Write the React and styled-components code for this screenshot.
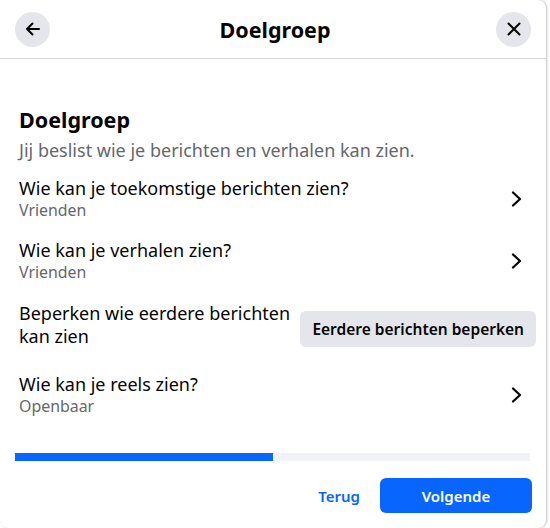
import React from 'react';
import styled, { createGlobalStyle } from 'styled-components';

const GlobalStyle = createGlobalStyle`
    body {
        margin: 0;
        background: #ffffff;
        font-family: "Noto Sans", "Open Sans", sans-serif;
        color: #050505;
    }
`

const Card = styled.div`
    width: 546px;
    height: 528px;
    background: #ffffff;
    border-radius: 0 8px 8px 8px;
    box-shadow: 1px 0 2px rgba(0, 0, 0, 0.25);
    display: flex;
    flex-direction: column;
    box-sizing: border-box;
`

const Header = styled.div`
    height: 58px;
    border-bottom: 1px solid #d6d8dc;
    display: flex;
    align-items: center;
    justify-content: space-between;
    padding: 0 15px;
    flex-shrink: 0;
`

const RoundButton = styled.button`
    width: 35px;
    height: 35px;
    border-radius: 50%;
    border: none;
    background: #e4e6eb;
    display: flex;
    align-items: center;
    justify-content: center;
    padding: 0;
`

const HeaderTitle = styled.h2`
    margin: 0 0 0 4px;
    font-size: 21.5px;
    font-weight: 700;
`

const Content = styled.div`
    padding: 47px 14px 0 19px;
    flex: 1;
`

const SectionTitle = styled.h3`
    margin: 0;
    font-size: 21.5px;
    font-weight: 700;
    line-height: 28px;
`

const SectionText = styled.p`
    margin: 3px 0 5px;
    font-size: 18px;
    line-height: 26px;
    color: #65676b;
`

const Row = styled.div`
    display: flex;
    align-items: ${p => p.tall ? 'flex-start' : 'center'};
    justify-content: space-between;
    min-height: ${p => p.tall ? 71.5 : 62}px;
    padding-top: ${p => p.tall ? 9.5 : 0}px;
    box-sizing: border-box;
`

const RowText = styled.div`
    display: flex;
    flex-direction: column;
    max-width: ${p => p.narrow ? '280px' : 'none'};
`

const RowTitle = styled.span`
    font-size: 18px;
    line-height: 23px;
`

const RowSub = styled.span`
    font-size: 15.9px;
    line-height: 21px;
    color: #65676b;
`

const Chevron = styled.svg`
    width: 20px;
    height: 20px;
    margin-right: 6px;
`

const GrayButton = styled.button`
    height: 36px;
    margin-top: 9.5px;
    margin-right: -4px;
    padding: 0 12px;
    border: none;
    border-radius: 6px;
    background: #e4e6eb;
    font-family: inherit;
    font-size: 15.5px;
    font-weight: 600;
    color: #050505;
`

const Progress = styled.div`
    margin: 0 16px 0 15px;
    height: 8px;
    background: #f0f2f5;
    flex-shrink: 0;
`

const ProgressFill = styled.div`
    height: 100%;
    background: #0866ff;
`

const Footer = styled.div`
    display: flex;
    justify-content: flex-end;
    align-items: center;
    gap: 20px;
    padding: 17px 14px 15px;
`

const TextButton = styled.button`
    border: none;
    background: none;
    color: #0866ff;
    font-family: inherit;
    font-size: 15px;
    font-weight: 600;
    padding: 0;
`

const PrimaryButton = styled.button`
    width: 152px;
    height: 35px;
    border: none;
    border-radius: 6px;
    background: #0866ff;
    color: #ffffff;
    font-family: inherit;
    font-size: 15px;
    font-weight: 600;
`

const ChevronRight = () => (
    <Chevron viewBox="0 0 20 20">
        <path d="M7 3.5 L14 10 L7 16.5" fill="none" stroke="#050505" strokeWidth="2.3" strokeLinecap="round" strokeLinejoin="round" />
    </Chevron>
)

const rows = [
    { title: 'Wie kan je toekomstige berichten zien?', sub: 'Vrienden' },
    { title: 'Wie kan je verhalen zien?', sub: 'Vrienden' },
    { title: 'Beperken wie eerdere berichten kan zien', button: 'Eerdere berichten beperken' },
    { title: 'Wie kan je reels zien?', sub: 'Openbaar' },
]

const App = () => {
    const progress = 50

    return (
        <>
            <GlobalStyle />
            <Card>
                <Header>
                    <RoundButton aria-label="Terug">
                        <svg width="20" height="20" viewBox="0 0 20 20">
                            <path d="M16 10 H4 M9.5 4.5 L4 10 L9.5 15.5" fill="none" stroke="#050505" strokeWidth="2" strokeLinecap="round" strokeLinejoin="round" />
                        </svg>
                    </RoundButton>
                    <HeaderTitle>Doelgroep</HeaderTitle>
                    <RoundButton aria-label="Sluiten">
                        <svg width="20" height="20" viewBox="0 0 20 20">
                            <path d="M4.5 4.5 L15.5 15.5 M15.5 4.5 L4.5 15.5" fill="none" stroke="#050505" strokeWidth="2" strokeLinecap="round" />
                        </svg>
                    </RoundButton>
                </Header>
                <Content>
                    <SectionTitle>Doelgroep</SectionTitle>
                    <SectionText>Jij beslist wie je berichten en verhalen kan zien.</SectionText>
                    {rows.map(r => (
                        <Row key={r.title} tall={!!r.button}>
                            <RowText narrow={!!r.button}>
                                <RowTitle>{r.title}</RowTitle>
                                {r.sub && <RowSub>{r.sub}</RowSub>}
                            </RowText>
                            {r.button ? <GrayButton>{r.button}</GrayButton> : <ChevronRight />}
                        </Row>
                    ))}
                </Content>
                <Progress>
                    <ProgressFill style={{ width: `${progress}%` }} />
                </Progress>
                <Footer>
                    <TextButton>Terug</TextButton>
                    <PrimaryButton>Volgende</PrimaryButton>
                </Footer>
            </Card>
        </>
    );
};

export default App;
